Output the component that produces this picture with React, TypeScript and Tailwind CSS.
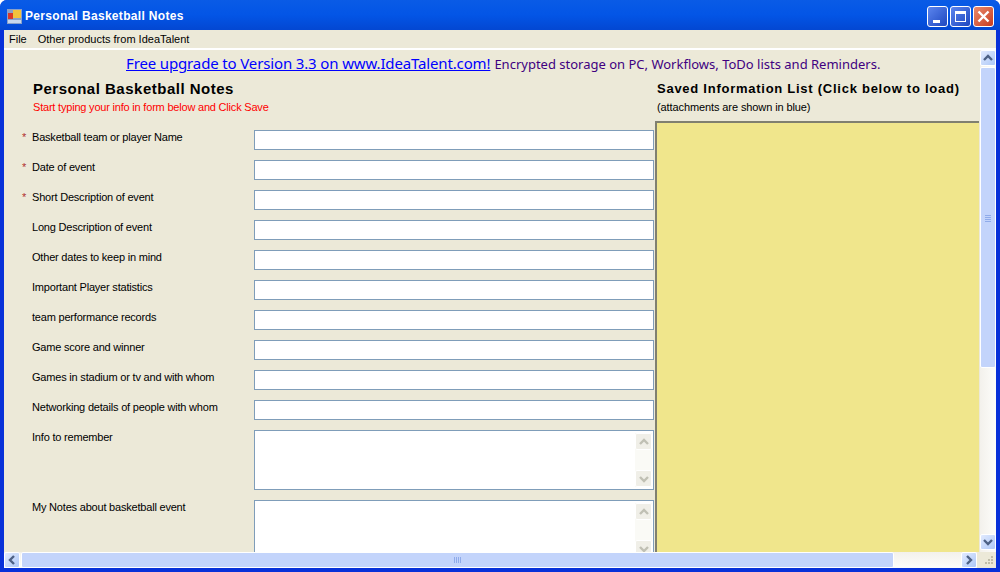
const singleFields = [
	{ label: "Basketball team or player Name", required: true },
	{ label: "Date of event", required: true },
	{ label: "Short Description of event", required: true },
	{ label: "Long Description of event", required: false },
	{ label: "Other dates to keep in mind", required: false },
	{ label: "Important Player statistics", required: false },
	{ label: "team performance records", required: false },
	{ label: "Game score and winner", required: false },
	{ label: "Games in stadium or tv and with whom", required: false },
	{ label: "Networking details of people with whom", required: false },
];

const multiFields = ["Info to remember", "My Notes about basketball event"];

function Chevron({ dir, color = "#4d6185" }: { dir: "up" | "down" | "left" | "right"; color?: string }) {
	const points = {
		up: "1,7 5,3 9,7",
		down: "1,3 5,7 9,3",
		left: "7,1 3,5 7,9",
		right: "3,1 7,5 3,9",
	}[dir];
	return (
		<svg width="10" height="10" viewBox="0 0 10 10">
			<polyline points={points} fill="none" stroke={color} strokeWidth="2.4" />
		</svg>
	);
}

function ScrollButton({ dir }: { dir: "up" | "down" | "left" | "right" }) {
	return (
		<div className="flex h-[16px] w-[16px] shrink-0 items-center justify-center rounded-[2px] border border-white bg-gradient-to-br from-[#e1eafe] to-[#aec8f7]">
			<Chevron dir={dir} />
		</div>
	);
}

function TextAreaBox() {
	return (
		<div className="flex h-[60px] w-[400px] justify-end border border-[#7f9db9] bg-white py-[2px] pr-px">
			<div className="flex w-[17px] flex-col justify-between bg-[#fafaf6]">
				<div className="flex h-[17px] items-center justify-center rounded-[2px] border border-white bg-[#f0efe8]">
					<Chevron dir="up" color="#c0c0b4" />
				</div>
				<div className="flex h-[17px] items-center justify-center rounded-[2px] border border-white bg-[#f0efe8]">
					<Chevron dir="down" color="#c0c0b4" />
				</div>
			</div>
		</div>
	);
}

export default function App() {
	return (
		<div className="flex h-[572px] w-[1000px] flex-col overflow-hidden rounded-t-[7px] bg-[#0831d9] font-['Liberation_Sans',sans-serif]">
			{/* title bar */}
			<div className="flex h-[30px] shrink-0 items-center bg-gradient-to-b from-[#0a5be6] via-[#0355e6] to-[#0347d2] pt-[2px] pl-[7px] pr-[6px]">
				<svg width="15" height="15" viewBox="0 0 15 15" className="shrink-0">
					<rect x="0" y="0" width="15" height="15" fill="#8aa0c8" />
					<rect x="1" y="4" width="5" height="6" fill="#d8382a" />
					<rect x="6" y="1" width="8" height="8" fill="#f2c23c" />
					<rect x="1" y="11" width="13" height="3" fill="#c8d8ee" />
				</svg>
				<span className="ml-[3px] text-[12px] font-bold tracking-[0.32px] text-white">Personal Basketball Notes</span>
				<div className="ml-auto flex gap-[2px]">
					<div className="flex h-[21px] w-[21px] items-end rounded-[3px] border border-white bg-gradient-to-br from-[#5c85ee] to-[#1f47c0] pb-[3px] pl-[5px]">
						<div className="h-[3px] w-[7px] bg-white" />
					</div>
					<div className="flex h-[21px] w-[21px] items-center justify-center rounded-[3px] border border-white bg-gradient-to-br from-[#5c85ee] to-[#1f47c0]">
						<div className="h-[11px] w-[11px] border border-t-[3px] border-white" />
					</div>
					<div className="flex h-[21px] w-[21px] items-center justify-center rounded-[3px] border border-white bg-gradient-to-br from-[#e8896c] to-[#c8391a]">
						<svg width="13" height="13" viewBox="0 0 13 13">
							<path d="M1.5 1.5 L11.5 11.5 M11.5 1.5 L1.5 11.5" stroke="#fff" strokeWidth="2.4" />
						</svg>
					</div>
				</div>
			</div>

			{/* window body */}
			<div className="mx-[4px] flex min-h-0 flex-1 flex-col bg-[#ece9d8]">
				{/* menu */}
				<div className="flex h-[20px] shrink-0 items-center gap-[11px] border-b-2 border-white pl-[5px] text-[11px] text-black">
					<span>File</span>
					<span>Other products from IdeaTalent</span>
				</div>

				<div className="flex min-h-0 flex-1">
					{/* scrollable content */}
					<div className="flex min-w-0 flex-1 flex-col overflow-hidden">
						{/* upgrade banner */}
						<div className="flex h-[26px] shrink-0 items-baseline pt-[2px] pl-[122px] font-['Noto_Sans',sans-serif] whitespace-nowrap">
							<a className="text-[15px] tracking-[-0.14px] text-[#0000ff] underline">Free upgrade to Version 3.3 on www.IdeaTalent.com!</a>
							<span className="ml-[4px] text-[13px] text-[#400080]">Encrypted storage on PC, Workflows, ToDo lists and Reminders.</span>
						</div>

						<div className="flex min-h-0 flex-1">
							{/* form */}
							<div className="w-[651px] shrink-0 overflow-hidden">
								<div className="pl-[29px] pt-[4px]">
									<h1 className="text-[15px] leading-[18px] font-bold tracking-[0.5px] text-black">Personal Basketball Notes</h1>
									<p className="mt-[2px] text-[11px] leading-[14px] tracking-[-0.2px] text-[#ff0000]">Start typing your info in form below and Click Save</p>
								</div>
								<div className="mt-[16px] flex flex-col gap-[10px]">
									{singleFields.map((field) => (
										<div key={field.label} className="flex h-[20px] items-start">
											<span className="w-[28px] pl-[18px] text-[11px] leading-[14px] text-[#b03030]">{field.required ? "*" : ""}</span>
											<span className="w-[222px] text-[11px] leading-[14px] tracking-[-0.2px] text-black">{field.label}</span>
											<div className="h-[20px] w-[400px] border border-[#7f9db9] bg-white" />
										</div>
									))}
									{multiFields.map((label) => (
										<div key={label} className="flex items-start">
											<span className="w-[28px]" />
											<span className="w-[222px] text-[11px] leading-[14px] tracking-[-0.2px] text-black">{label}</span>
											<TextAreaBox />
										</div>
									))}
								</div>
							</div>

							{/* saved list */}
							<div className="flex min-w-0 flex-1 flex-col">
								<div className="h-[45px] shrink-0 pl-[2px] pt-[4px]">
									<h2 className="text-[13px] leading-[18px] font-bold tracking-[0.74px] whitespace-nowrap text-black">Saved Information List (Click below to load)</h2>
									<p className="mt-[2px] text-[11px] leading-[14px] tracking-[-0.1px] text-black">(attachments are shown in blue)</p>
								</div>
								<div className="min-h-0 flex-1 border-t-2 border-l-2 border-[#808070] bg-[#f0e68c]" />
							</div>
						</div>
					</div>

					{/* vertical scrollbar */}
					<div className="ml-px flex w-[16px] shrink-0 flex-col bg-gradient-to-r from-[#f3f1ec] to-[#fdfdfa]">
						<ScrollButton dir="up" />
						<div className="relative mt-px h-[301px] rounded-[2px] border border-white bg-[#c3d4fb]">
							<div className="absolute top-[147px] left-[4px] flex flex-col gap-px">
								<div className="h-px w-[6px] bg-[#8fabea]" />
								<div className="h-px w-[6px] bg-[#8fabea]" />
								<div className="h-px w-[6px] bg-[#8fabea]" />
								<div className="h-px w-[6px] bg-[#8fabea]" />
							</div>
						</div>
						<div className="mt-auto mb-[2px]">
							<ScrollButton dir="down" />
						</div>
					</div>
				</div>

				{/* horizontal scrollbar */}
				<div className="flex h-[16px] shrink-0 bg-gradient-to-b from-[#f3f1ec] to-[#fdfdfa]">
					<ScrollButton dir="left" />
					<div className="relative ml-px h-[16px] w-[873px] rounded-[2px] border border-white bg-[#c3d4fb]">
						<div className="absolute top-[4px] left-[432px] flex gap-px">
							<div className="h-[6px] w-px bg-[#8fabea]" />
							<div className="h-[6px] w-px bg-[#8fabea]" />
							<div className="h-[6px] w-px bg-[#8fabea]" />
							<div className="h-[6px] w-px bg-[#8fabea]" />
						</div>
					</div>
					<div className="ml-auto flex">
						<ScrollButton dir="right" />
						<div className="flex w-[19px] items-end justify-end bg-[#ece9d8] p-[2px]">
							<svg width="11" height="11" viewBox="0 0 11 11">
								<path d="M8 1h2v2H8zM5 4h2v2H5zM8 4h2v2H8zM2 7h2v2H2zM5 7h2v2H5zM8 7h2v2H8z" fill="#c0bda8" />
							</svg>
						</div>
					</div>
				</div>
			</div>
			<div className="h-[4px] shrink-0" />
		</div>
	);
}
